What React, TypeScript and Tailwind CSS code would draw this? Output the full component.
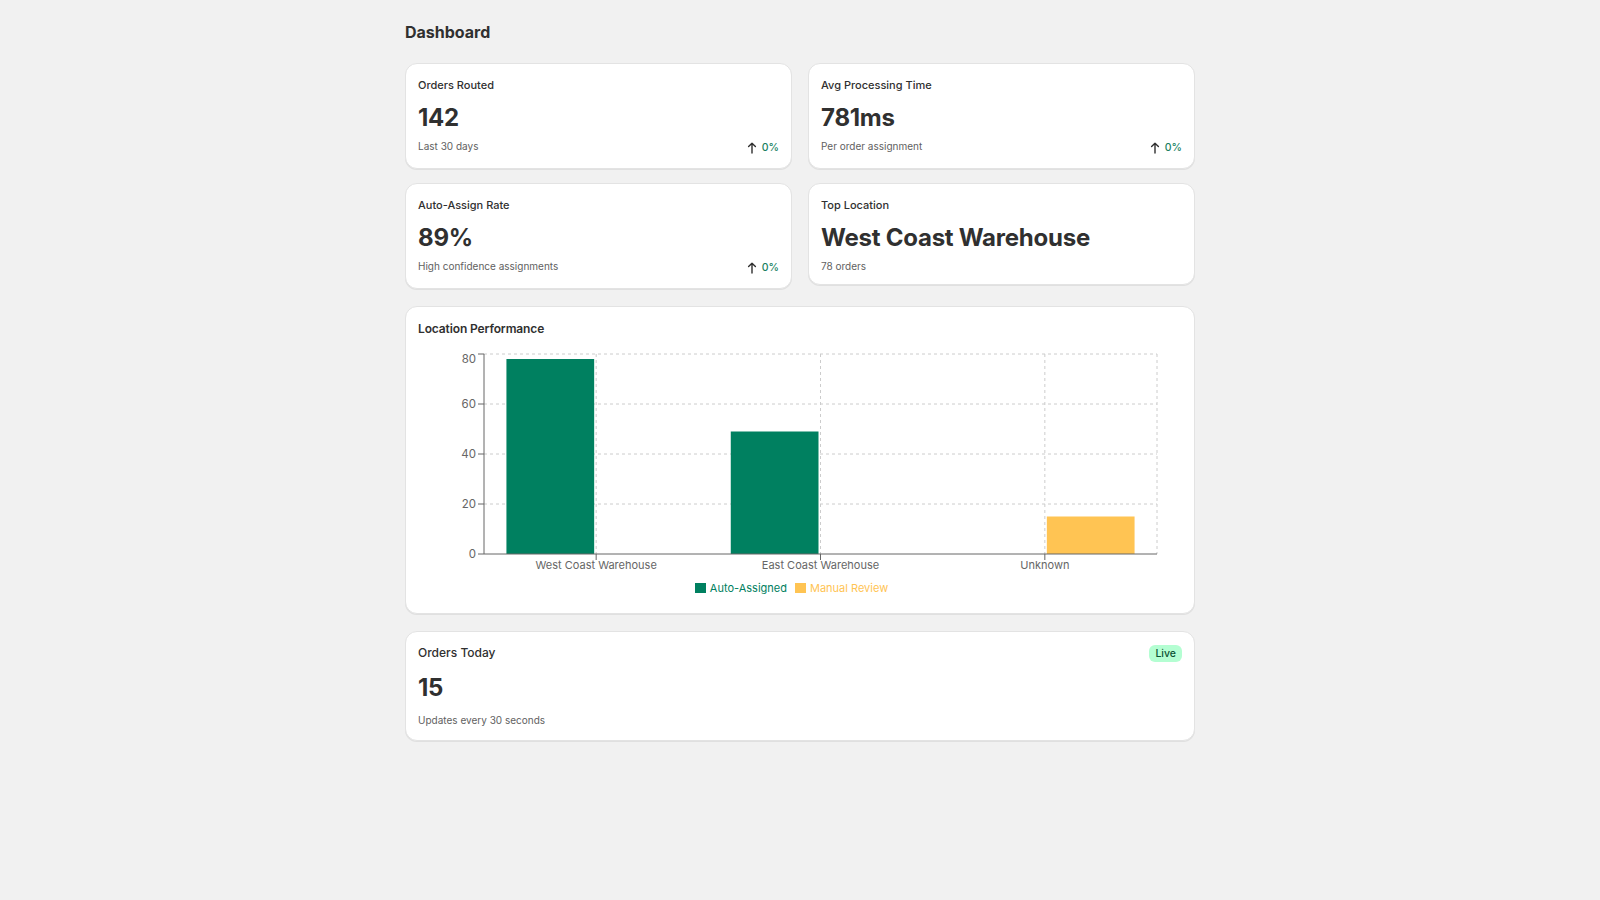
import React from "react";

type Metric = {
    label: string;
    value: string;
    sub: string;
    change?: string;
};

const metrics: Metric[] = [
    { label: "Orders Routed", value: "142", sub: "Last 30 days", change: "0%" },
    { label: "Avg Processing Time", value: "781ms", sub: "Per order assignment", change: "0%" },
    { label: "Auto-Assign Rate", value: "89%", sub: "High confidence assignments", change: "0%" },
    { label: "Top Location", value: "West Coast Warehouse", sub: "78 orders" },
];

const locations = [
    { name: "West Coast Warehouse", auto: 78, manual: 0 },
    { name: "East Coast Warehouse", auto: 49, manual: 0 },
    { name: "Unknown", auto: 0, manual: 15 },
];

const GREEN = "#008060";
const YELLOW = "#ffc453";

const ArrowUp = () => (
    <svg width="20" height="20" viewBox="0 0 20 20" fill="none">
        <path d="M10 15V5.2M6.6 8.6L10 5.2l3.4 3.4" stroke="#303030" strokeWidth="1.4" strokeLinecap="round" strokeLinejoin="round" />
    </svg>
);

const Card = ({ children, className = "" }: { children: React.ReactNode; className?: string }) => (
    <div className={`rounded-xl border border-[#e3e3e3] bg-white shadow-[0_1px_0_0_rgba(26,26,26,0.08)] ${className}`}>
        {children}
    </div>
);

const MetricCard = ({ m }: { m: Metric }) => (
    <Card className="px-3 pt-3 pb-[10px]">
        <p className="text-[11px] leading-[18px] font-medium text-[#303030]">{m.label}</p>
        <p className="mt-2 text-[24px] leading-8 font-bold tracking-[-0.01em] text-[#303030]">{m.value}</p>
        <div className={`mt-1 flex items-start justify-between ${m.change ? "h-5" : "h-4"}`}>
            <span className="text-[10px] leading-4 text-[#616161]">{m.sub}</span>
            {m.change && (
                <span className="flex items-center">
                    <ArrowUp />
                    <span className="text-[10.5px] font-medium text-[#1a7f5f]">{m.change}</span>
                </span>
            )}
        </div>
    </Card>
);

const Chart = () => {
    // plot area inside the svg
    const left = 66;
    const right = 739;
    const top = 16;
    const bottom = 216;
    const band = (right - left) / locations.length;
    const gapOuter = band * 0.1;
    const barW = (band - gapOuter * 2 - 4) / 2;
    const y = (v: number) => bottom - (v / 80) * (bottom - top);
    const ticks = [0, 20, 40, 60, 80];

    return (
        <svg width="764" height="240" className="block">
            {/* grid */}
            {ticks.filter(t => t > 0).map(t => (
                <line key={t} x1={left} x2={right} y1={y(t)} y2={y(t)} stroke="#cccccc" strokeDasharray="3 3" />
            ))}
            {locations.map((_, i) => (
                <line key={i} x1={left + band * i + band / 2} x2={left + band * i + band / 2} y1={top} y2={bottom} stroke="#cccccc" strokeDasharray="3 3" />
            ))}
            <line x1={right} x2={right} y1={top} y2={bottom} stroke="#cccccc" strokeDasharray="3 3" />

            {/* bars */}
            {locations.map((loc, i) => {
                const x0 = left + band * i + gapOuter;
                return (
                    <g key={loc.name}>
                        {loc.auto > 0 && <rect x={x0} y={y(loc.auto)} width={barW} height={bottom - y(loc.auto)} fill={GREEN} />}
                        {loc.manual > 0 && <rect x={x0 + barW + 4} y={y(loc.manual)} width={barW} height={bottom - y(loc.manual)} fill={YELLOW} />}
                    </g>
                );
            })}

            {/* axes */}
            <line x1={left} x2={left} y1={top} y2={bottom} stroke="#666666" />
            <line x1={left} x2={right} y1={bottom} y2={bottom} stroke="#666666" />
            {ticks.map(t => (
                <g key={t}>
                    <line x1={left - 6} x2={left} y1={y(t)} y2={y(t)} stroke="#666666" />
                    <text x={left - 8} y={t === 80 ? y(t) + 4.5 : y(t)} dy="0.355em" textAnchor="end" fontSize="11.5" fill="#666666">{t}</text>
                </g>
            ))}
            {locations.map((loc, i) => {
                const cx = left + band * i + band / 2;
                return (
                    <g key={loc.name}>
                        <line x1={cx} x2={cx} y1={bottom} y2={bottom + 6} stroke="#666666" />
                        <text x={cx} y={bottom + 11} dy="0.355em" textAnchor="middle" fontSize="11" fill="#666666">{loc.name}</text>
                    </g>
                );
            })}
        </svg>
    );
};

export default function App() {
    return (
        <div className="min-h-screen bg-[#f1f1f1] font-['Inter','Noto_Sans',sans-serif] text-[#303030]">
            <div className="mx-auto w-[790px] pt-[21px] pb-10">
                <h1 className="text-[16px] leading-[22px] font-bold">Dashboard</h1>

                <div className="mt-[20px] grid grid-cols-2 items-start gap-x-4 gap-y-[14px]">
                    {metrics.map(m => (
                        <MetricCard key={m.label} m={m} />
                    ))}
                </div>

                <Card className="mt-[17px] px-3 pt-[13px] pb-[15px]">
                    <p className="text-[12px] leading-[18px] font-semibold tracking-[-0.01em]">Location Performance</p>
                    <Chart />
                    <div className="flex h-5 items-center justify-center gap-2 pr-[17px] text-[11px]">
                        <span className="flex items-center gap-1 text-[#008060]">
                            <span className="h-[10px] w-[11px] bg-[#008060]" />
                            Auto-Assigned
                        </span>
                        <span className="flex items-center gap-1 text-[#ffc453]">
                            <span className="h-[10px] w-[11px] bg-[#ffc453]" />
                            Manual Review
                        </span>
                    </div>
                </Card>

                <Card className="mt-[17px] p-3">
                    <div className="flex h-[18px] items-center justify-between">
                        <p className="text-[12px] font-medium">Orders Today</p>
                        <span className="rounded-md bg-[#b4fed2] px-1.5 text-[10.5px] leading-[17px] font-medium text-[#0c5132]">Live</span>
                    </div>
                    <p className="mt-2 text-[24px] leading-9 font-bold tracking-[-0.01em]">15</p>
                    <p className="mt-1.5 text-[10px] leading-4 text-[#616161]">Updates every 30 seconds</p>
                </Card>
            </div>
        </div>
    );
}
